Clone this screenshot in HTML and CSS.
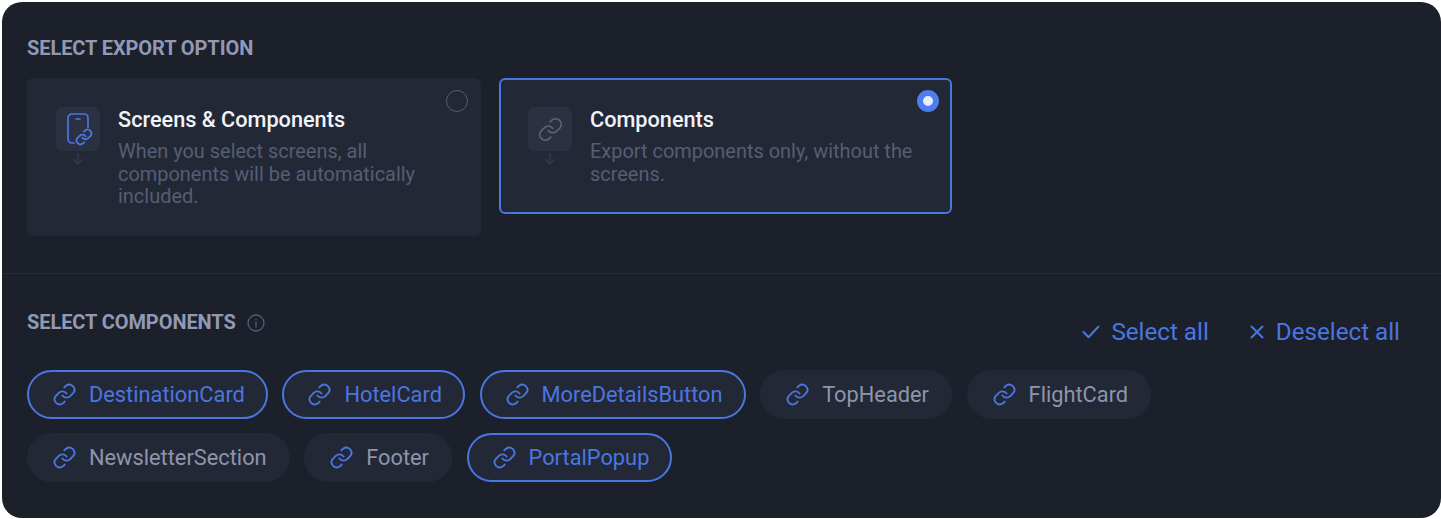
FILE: index.html
```html
<!DOCTYPE html>
<html lang="en">
<head>
<meta charset="utf-8">
<title>Export</title>
<link rel="stylesheet" href="styles.css">
</head>
<body>
<main class="panel">
  <section class="top">
    <h2 class="label">SELECT EXPORT OPTION</h2>
    <div class="options">
      <div class="option">
        <div class="opt-icon">
          <div class="tile">
            <svg width="44" height="44" viewBox="0 0 44 44" fill="none" stroke="#4a76e0" stroke-width="1.700" stroke-linecap="round" stroke-linejoin="round"><path d="M18 36h-2a4 4 0 0 1-4-4V11a4 4 0 0 1 4-4h12a4 4 0 0 1 4 4v9"/><path d="M20 12h4"/><path transform="translate(18.600 20.600) scale(.78)" stroke-width="2.300" d="M10 13a5 5 0 0 0 7.500.5l3-3a5 5 0 0 0-7-7l-1.700 1.700M14 11a5 5 0 0 0-7.500-.5l-3 3a5 5 0 0 0 7 7l1.700-1.700"/></svg>
          </div>
          <svg class="arrow" width="14" height="14" viewBox="0 0 14 14" fill="none" stroke="#353c50" stroke-width="1.4" stroke-linecap="round" stroke-linejoin="round"><path d="M7 1v11M2.500 7.500L7 12l4.500-4.500"/></svg>
        </div>
        <div class="opt-text">
          <div class="opt-title">Screens &amp; Components</div>
          <div class="opt-desc">When you select screens, all components will be automatically included.</div>
        </div>
        <span class="radio"></span>
      </div>
      <div class="option selected">
        <div class="opt-icon">
          <div class="tile">
            <svg width="27" height="27" viewBox="0 0 24 24" fill="none" stroke="#5a6175" stroke-width="1.600" stroke-linecap="round" stroke-linejoin="round"><path d="M10 13a5 5 0 0 0 7.500.5l3-3a5 5 0 0 0-7-7l-1.700 1.700"/><path d="M14 11a5 5 0 0 0-7.500-.5l-3 3a5 5 0 0 0 7 7l1.700-1.700"/></svg>
          </div>
          <svg class="arrow" width="14" height="14" viewBox="0 0 14 14" fill="none" stroke="#353c50" stroke-width="1.4" stroke-linecap="round" stroke-linejoin="round"><path d="M7 1v11M2.500 7.500L7 12l4.500-4.500"/></svg>
        </div>
        <div class="opt-text">
          <div class="opt-title">Components</div>
          <div class="opt-desc">Export components only, without the screens.</div>
        </div>
        <span class="radio on"></span>
      </div>
    </div>
  </section>
  <section class="bottom">
    <div class="bottom-head">
      <div class="head-left">
        <h2 class="label">SELECT COMPONENTS</h2>
        <svg class="info" width="18" height="18" viewBox="0 0 18 18" fill="none" stroke="#565d72" stroke-width="1.300" stroke-linecap="round"><circle cx="9" cy="9" r="8"/><path d="M9 8.200v4.600M9 5.300v.2"/></svg>
      </div>
      <div class="actions">
        <span class="action"><svg width="18" height="14" viewBox="0 0 18 14" fill="none" stroke="#4a76e0" stroke-width="2" stroke-linecap="round" stroke-linejoin="round"><path d="M1.500 7l5 5.200L16.500 1.500"/></svg>Select all</span>
        <span class="action"><svg width="14" height="14" viewBox="0 0 14 14" fill="none" stroke="#4a76e0" stroke-width="2" stroke-linecap="round"><path d="M1.500 1.500l11 11M12.500 1.500l-11 11"/></svg>Deselect all</span>
      </div>
    </div>
    <div class="chips">
      <div class="chip-row">
        <span class="chip active"><svg class="link"><use href="#lnk"/></svg>DestinationCard</span>
        <span class="chip active"><svg class="link"><use href="#lnk"/></svg>HotelCard</span>
        <span class="chip active"><svg class="link"><use href="#lnk"/></svg>MoreDetailsButton</span>
        <span class="chip"><svg class="link"><use href="#lnk"/></svg>TopHeader</span>
        <span class="chip"><svg class="link"><use href="#lnk"/></svg>FlightCard</span>
      </div>
      <div class="chip-row">
        <span class="chip"><svg class="link"><use href="#lnk"/></svg>NewsletterSection</span>
        <span class="chip"><svg class="link"><use href="#lnk"/></svg>Footer</span>
        <span class="chip active"><svg class="link"><use href="#lnk"/></svg>PortalPopup</span>
      </div>
    </div>
  </section>
</main>
<svg width="0" height="0" class="defs"><defs><symbol id="lnk" viewBox="0 0 24 24"><path fill="none" stroke="#4a76e0" stroke-width="1.800" stroke-linecap="round" stroke-linejoin="round" d="M10 13a5 5 0 0 0 7.500.5l3-3a5 5 0 0 0-7-7l-1.700 1.700M14 11a5 5 0 0 0-7.500-.5l-3 3a5 5 0 0 0 7 7l1.700-1.700"/></symbol></defs></svg>
</body>
</html>
```
FILE: styles.css
```css
* { box-sizing: border-box; }
html, body { margin: 0; padding: 0; background: #fff; }
body { width: 1441px; height: 519px; overflow: hidden; padding: 2px 0 1px 2px; font-family: Roboto, "Liberation Sans", sans-serif; }
.panel { width: 1439px; height: 516px; background: #1b202b; border-radius: 20px; display: flex; flex-direction: column; }
.top { height: 272px; padding: 34px 25px 0; border-bottom: 1px solid #262b38; }
.label { margin: 0; font-size: 20px; line-height: 24px; font-weight: 700; color: #9299b4; letter-spacing: -0.08px; }
.options { display: flex; align-items: flex-start; gap: 18px; margin-top: 18px; }
.option { position: relative; width: 454px; background: #232836; border-radius: 6px; padding: 29px 28px 28.500px 29px; display: flex; gap: 18px; border: 0; }
.option.selected { width: 453px; border: 2px solid #4a76e0; padding: 27px 28px 27px 27px; }
.opt-icon { flex: none; width: 44px; display: flex; flex-direction: column; align-items: center; }
.tile { width: 44px; height: 44px; border-radius: 7px; background: #2b3143; display: flex; align-items: center; justify-content: center; flex: none; }
.arrow { margin-top: 1px; }
.opt-text { flex: 1; }
.opt-title { margin-top: 1px; font-size: 21.700px; line-height: 24px; font-weight: 500; color: #f1f3f8; }
.opt-desc { margin-top: 8px; font-size: 19.950px; line-height: 22.500px; color: #565d74; }
.radio { position: absolute; top: 12px; right: 13px; width: 22px; height: 22px; border-radius: 50%; border: 1.500px solid #565c6e; }
.radio.on { top: 10px; right: 11px; border: 6px solid #4f7df0; background: #e8edfd; }
.bottom { flex: 1; padding: 36px 41px 0 25px; }
.bottom-head { display: flex; justify-content: space-between; align-items: flex-start; }
.head-left { display: flex; align-items: center; gap: 11px; }
.info { margin-top: 1px; }
.actions { display: flex; gap: 41px; margin-top: 8px; }
.action { display: flex; align-items: center; gap: 11px; font-size: 24.200px; line-height: 28px; color: #4a76e0; }
.action + .action { gap: 12px; }
.chips { display: flex; flex-direction: column; gap: 14px; margin-top: 24px; }
.chip-row { display: flex; gap: 14.500px; }
.chip { display: flex; align-items: center; gap: 12px; height: 49px; padding: 0 23.100px 0 25px; border-radius: 25px; background: #232836; color: #8d95ae; font-size: 21.800px; }
.chip.active { border: 2px solid #4a76e0; color: #4a76e0; padding: 0 21.100px 0 23px; }
.link { width: 25px; height: 25px; flex: none; }
.defs { position: absolute; }
```
